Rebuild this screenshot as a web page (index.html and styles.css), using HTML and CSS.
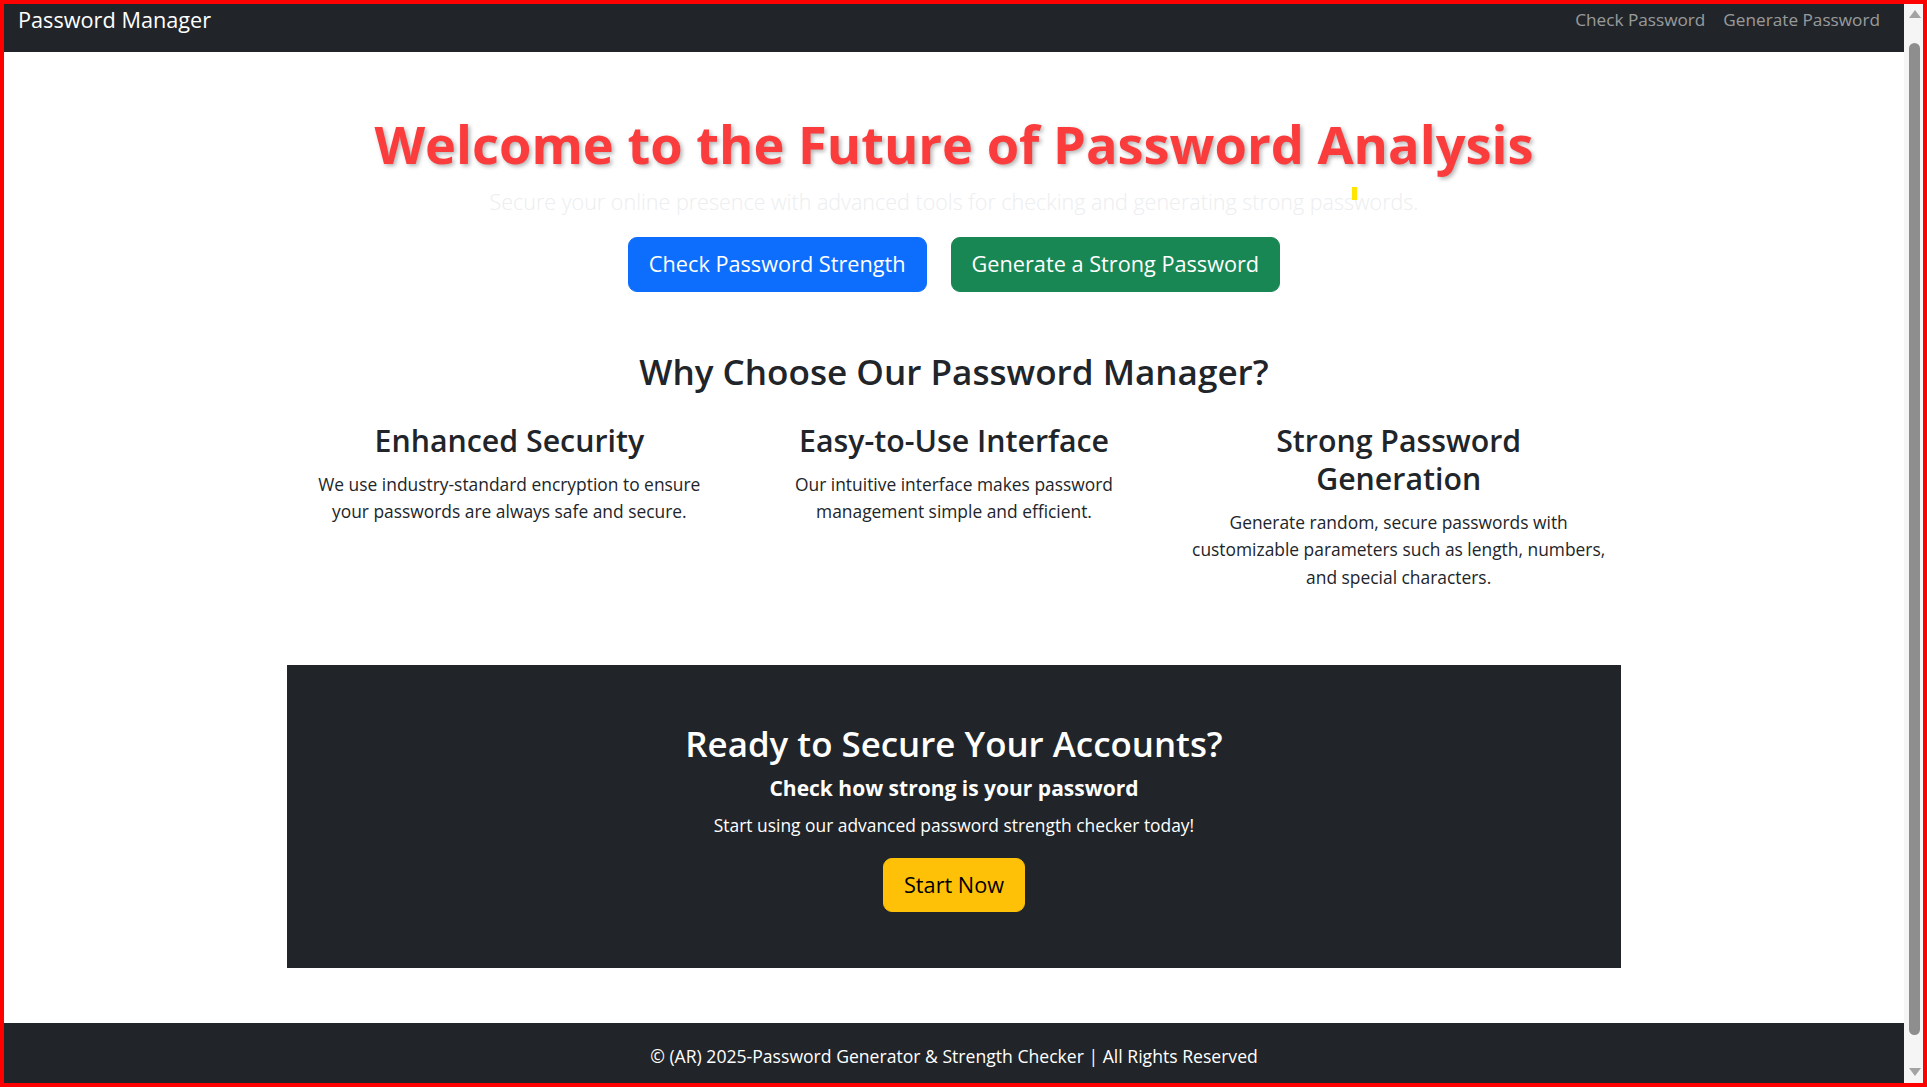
FILE: index.html
```html
<!DOCTYPE html>
<html lang="en">
<head>
<meta charset="utf-8">
<title>Password Manager</title>
<link rel="stylesheet" href="styles.css">
</head>
<body>
<div class="frame">
  <div class="page">
    <nav class="navbar">
      <a class="brand" href="#">Password Manager</a>
      <ul class="nav">
        <li><a class="nav-link" href="#">Check Password</a></li>
        <li><a class="nav-link" href="#">Generate Password</a></li>
      </ul>
    </nav>
    <main>
      <section class="hero">
        <h1 class="hero-title">Welcome to the Future of Password Analysis</h1>
        <p class="lead">Secure your online presence with advanced tools for checking and generating strong passwords.</p>
        <div class="hero-actions">
          <a class="btn btn-primary" href="#">Check Password Strength</a>
          <a class="btn btn-success" href="#">Generate a Strong Password</a>
        </div>
      </section>
      <section class="features">
        <h2 class="section-title">Why Choose Our Password Manager?</h2>
        <div class="feature-grid">
          <div class="feature">
            <h3 class="feature-title">Enhanced Security</h3>
            <p class="feature-text">We use industry-standard encryption to ensure<br>your passwords are always safe and secure.</p>
          </div>
          <div class="feature">
            <h3 class="feature-title">Easy-to-Use Interface</h3>
            <p class="feature-text">Our intuitive interface makes password<br>management simple and efficient.</p>
          </div>
          <div class="feature">
            <h3 class="feature-title">Strong Password<br>Generation</h3>
            <p class="feature-text">Generate random, secure passwords with<br>customizable parameters such as length, numbers,<br>and special characters.</p>
          </div>
        </div>
      </section>
      <section class="cta">
        <h2 class="cta-title">Ready to Secure Your Accounts?</h2>
        <h5 class="cta-sub">Check how strong is your password</h5>
        <p class="cta-text">Start using our advanced password strength checker today!</p>
        <a class="btn btn-warning" href="#">Start Now</a>
      </section>
    </main>
    <footer class="footer">
      <p>&copy; (AR) 2025-Password Generator &amp; Strength Checker | All Rights Reserved</p>
    </footer>
  </div>
  <div class="scrollbar">
    <span class="sb-up"></span>
    <span class="sb-thumb"></span>
    <span class="sb-down"></span>
  </div>
</div>
<span class="cursor"></span>
</body>
</html>
```
FILE: styles.css
```css
* { box-sizing: border-box; }

html, body { height: 100%; }

body {
  margin: 0;
  position: relative;
  border: 4px solid #ff0000;
  overflow: hidden;
  font-family: "Open Sans", "Noto Sans", sans-serif;
  font-size: 17.4px;
  line-height: 1.5;
  color: #212529;
  background: #fff;
}

a { text-decoration: none; }

.frame {
  display: flex;
  height: 100%;
}

.page {
  flex: 1;
  min-width: 0;
  overflow: hidden;
  display: flex;
  flex-direction: column;
}

/* Navbar */
.navbar {
  flex: none;
  height: 48px;
  background: #212529;
  display: flex;
  justify-content: space-between;
  align-items: flex-start;
  padding: 1px 24px 0 14px;
}

.brand {
  color: #fff;
  font-size: 21.7px;
  line-height: 30px;
}

.nav {
  list-style: none;
  margin: 0;
  padding: 0;
  display: flex;
  gap: 18px;
}

.nav-link {
  display: block;
  color: rgba(255, 255, 255, 0.55);
  font-size: 17.2px;
  line-height: 30px;
}

/* Hero */
.hero {
  padding-top: 60px;
  text-align: center;
}

.hero-title {
  margin: 0 0 9px;
  font-size: 52.4px;
  line-height: 64.8px;
  font-weight: 700;
  color: #fb3c3c;
  text-shadow: 2px 2px 4px rgba(0, 0, 0, 0.3);
}

.lead {
  margin: 0 0 19px;
  font-size: 21.5px;
  line-height: 32.5px;
  font-weight: 300;
  color: #eceef0;
}

.hero-actions {
  display: flex;
  justify-content: center;
  gap: 24px;
}

.btn {
  display: inline-block;
  padding: 10px 20px;
  font-size: 21.7px;
  line-height: 32.5px;
  border: 1px solid transparent;
  border-radius: 9px;
}

.btn-primary { background: #0d6efd; border-color: #0d6efd; color: #fff; }
.btn-success { background: #198754; border-color: #198754; color: #fff; }
.btn-warning { background: #ffc107; border-color: #ffc107; color: #000; }

/* Features */
.features {
  padding-top: 59px;
  text-align: center;
}

.section-title {
  margin: 0 0 29px;
  font-size: 35.1px;
  line-height: 41.8px;
  font-weight: 600;
}

.feature-grid {
  width: 1334px;
  margin: 0 auto;
  display: grid;
  grid-template-columns: repeat(3, 1fr);
}

.feature {
  padding: 0 15px;
}

.feature-title {
  margin: 0 0 11px;
  font-size: 30.3px;
  line-height: 38px;
  font-weight: 600;
}

.feature-text {
  margin: 0;
  line-height: 27.7px;
}

/* Call to action */
.cta {
  width: 1334px;
  margin: 73px auto 0;
  padding: 58px 0 56px;
  background: #212529;
  color: #fff;
  text-align: center;
}

.cta-title {
  margin: 0 0 11px;
  font-size: 34.9px;
  line-height: 41.8px;
  font-weight: 600;
}

.cta-sub {
  margin: 0 0 11px;
  font-size: 21px;
  line-height: 25.2px;
  font-weight: 700;
}

.cta-text {
  margin: 0 0 20px;
  line-height: 26.1px;
}

/* Footer */
.footer {
  flex: none;
  margin-top: 55px;
  padding: 20px 0;
  background: #212529;
  color: #fff;
  text-align: center;
}

.footer p {
  margin: 0;
  font-size: 17.6px;
  line-height: 26.1px;
}

/* Window scrollbar */
.scrollbar {
  flex: none;
  width: 19px;
  background: #f5f5f5;
  display: flex;
  flex-direction: column;
  align-items: center;
  padding-left: 2px;
}

.sb-up {
  margin-top: 6px;
  width: 0;
  height: 0;
  border-left: 6px solid transparent;
  border-right: 6px solid transparent;
  border-bottom: 8px solid #a3a3a3;
}

.sb-thumb {
  margin-top: 25px;
  width: 11px;
  height: 992px;
  border-radius: 6px;
  background: #8e8e8e;
}

.sb-down {
  margin-top: 33px;
  width: 0;
  height: 0;
  border-left: 6px solid transparent;
  border-right: 6px solid transparent;
  border-top: 8px solid #a3a3a3;
}

/* Mouse cursor visible in the capture */
.cursor {
  position: absolute;
  left: 1348px;
  top: 183px;
  width: 5px;
  height: 13px;
  background: #ffe500;
}
```
